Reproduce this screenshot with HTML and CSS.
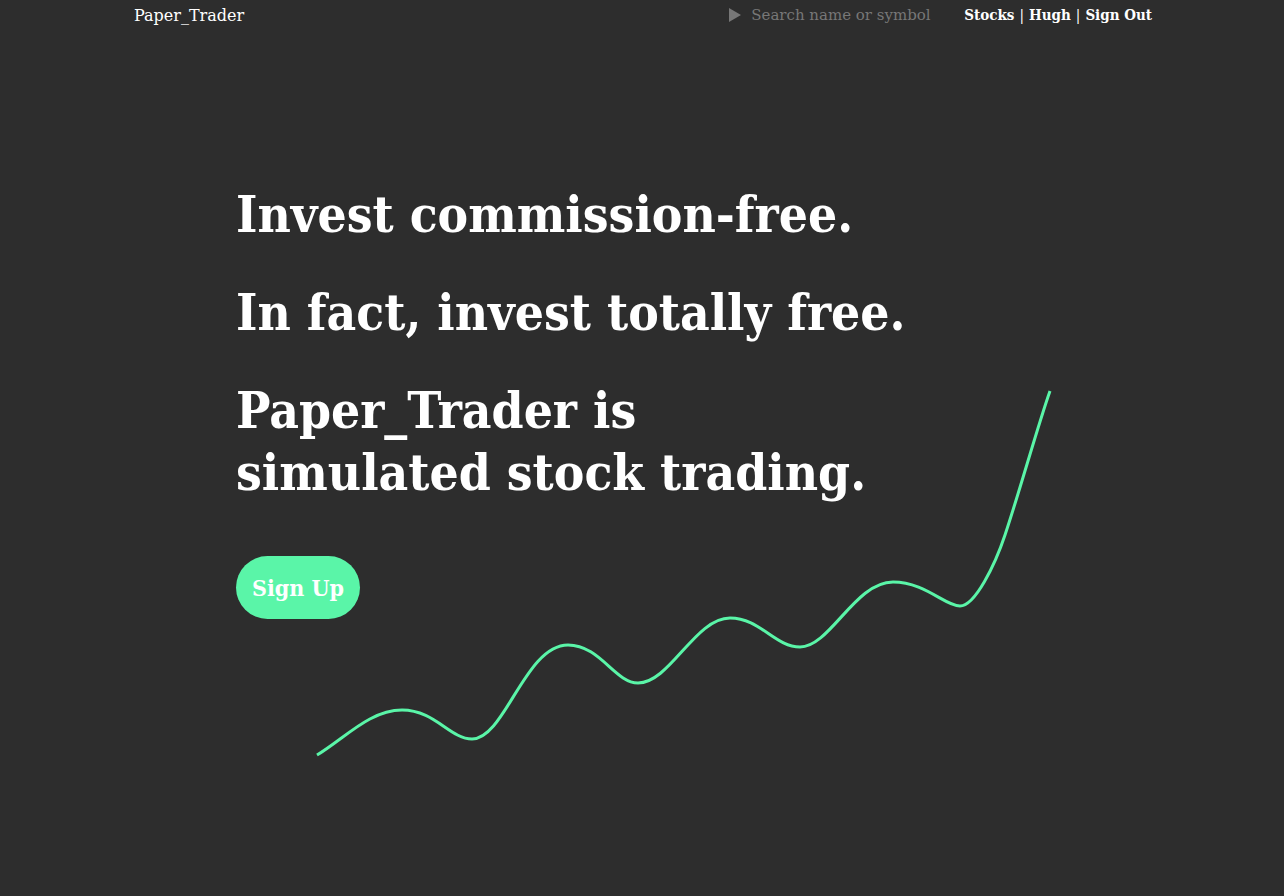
FILE: index.html
```html
<!DOCTYPE html>
<html lang="en">
<head>
<meta charset="utf-8">
<title>Paper_Trader</title>
<link rel="stylesheet" href="styles.css">
</head>
<body>
<header class="nav">
  <div class="nav-inner">
    <a class="logo" href="#">Paper_Trader</a>
    <div class="nav-right">
      <form class="search">
        <svg class="search-icon" viewBox="0 0 12 14" width="12" height="14" aria-hidden="true"><path d="M0,0 L12,7 L0,14 Z" fill="#777777"/></svg>
        <input class="search-input" type="text" placeholder="Search name or symbol">
      </form>
      <nav class="links">
        <a href="#">Stocks</a><span class="sep">|</span><a href="#">Hugh</a><span class="sep">|</span><a href="#">Sign Out</a>
      </nav>
    </div>
  </div>
</header>
<main class="hero">
  <div class="hero-text">
    <h1 class="line">Invest commission-free.</h1>
    <h1 class="line">In fact, invest totally free.</h1>
    <h1 class="line">Paper_Trader is<br>simulated stock trading.</h1>
    <a class="signup" href="#">Sign Up</a>
  </div>
  <svg class="chart" viewBox="132 30 1020 760" width="1020" height="760" aria-hidden="true">
    <path d="M317,755 C345,738 370,710 402,710 C435,710 450,739 472,739 C505,739 525,645 568,645 C600,645 615,683 638,683 C670,683 695,618 730,618 C760,618 775,647 800,647 C830,647 855,582 893,582 C925,582 945,606 960,606 C975,606 995,565 1005,535 C1020,490 1038,425 1050,391" fill="none" stroke="#5af5a8" stroke-width="3"/>
  </svg>
</main>
</body>
</html>
```
FILE: styles.css
```css
html, body {
  margin: 0;
  padding: 0;
  background: #2d2d2d;
  min-height: 896px;
}
body {
  font-family: "DejaVu Serif", "Liberation Serif", serif;
  color: #ffffff;
}
a {
  color: #ffffff;
  text-decoration: none;
}
.nav {
  height: 30px;
}
.nav-inner {
  width: 1020px;
  margin: 0 auto;
  height: 30px;
  display: flex;
  align-items: center;
  justify-content: space-between;
  padding: 0 0 0 2px;
  box-sizing: border-box;
}
.logo {
  font-size: 16px;
  font-weight: normal;
}
.nav-right {
  display: flex;
  align-items: center;
  gap: 29px;
}
.search {
  display: flex;
  align-items: center;
  gap: 10px;
  margin: 0;
}
.search-icon {
  display: block;
}
.search-input {
  background: transparent;
  border: none;
  outline: none;
  padding: 0;
  width: 184px;
  font-family: "DejaVu Serif", serif;
  font-size: 15px;
  color: #ffffff;
}
.search-input::placeholder {
  color: #777777;
}
.links {
  display: flex;
  align-items: center;
  gap: 5px;
  font-size: 15px;
  font-weight: bold;
  font-stretch: condensed;
}
.sep {
  font-weight: normal;
}
.hero {
  width: 1020px;
  margin: 0 auto;
  display: grid;
}
.hero-text, .chart {
  grid-area: 1 / 1;
}
.hero-text {
  padding: 153px 0 0 104px;
  position: relative;
  z-index: 1;
}
.line {
  margin: 0 0 36px 0;
  font-size: 51px;
  line-height: 62px;
  font-weight: bold;
  font-stretch: condensed;
}
.signup {
  display: inline-block;
  margin-top: 17px;
  height: 63px;
  line-height: 63px;
  padding: 0 16px;
  border-radius: 32px;
  background: #5af5a8;
  font-size: 23px;
  font-weight: bold;
  font-stretch: condensed;
}
.chart {
  display: block;
}
```
